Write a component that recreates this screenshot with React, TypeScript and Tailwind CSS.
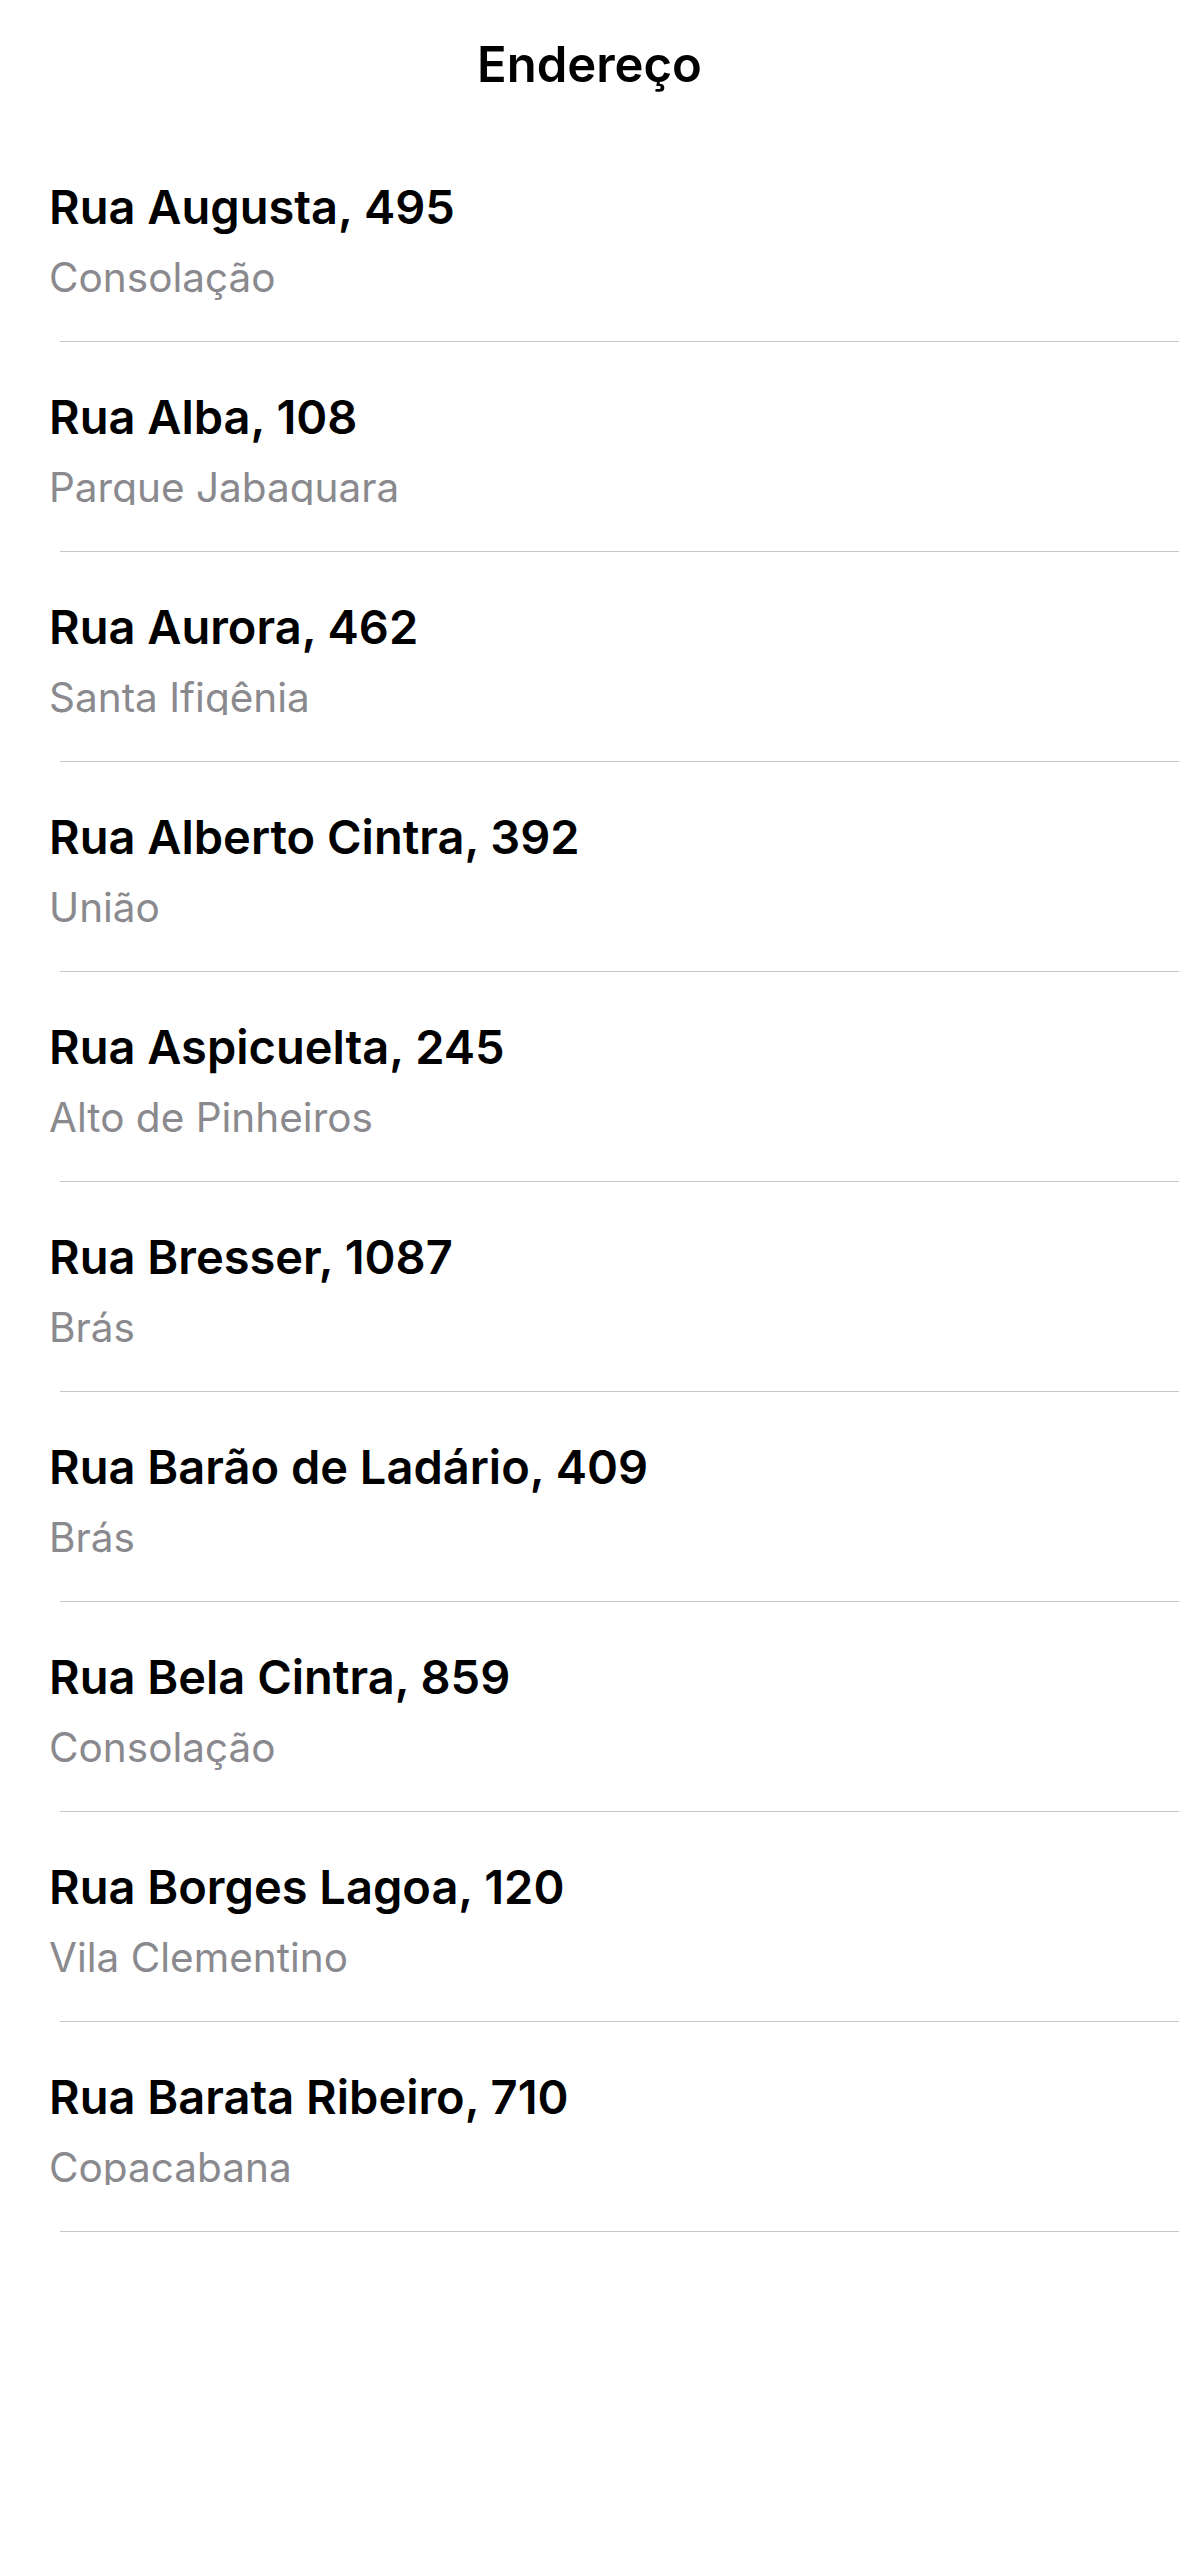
import React from 'react';

interface Address {
  street: string;
  district: string;
  // some rows in the capture have the descenders cut off
  clipped?: boolean;
}

const addresses: Address[] = [
  { street: 'Rua Augusta, 495', district: 'Consolação' },
  { street: 'Rua Alba, 108', district: 'Parque Jabaquara', clipped: true },
  { street: 'Rua Aurora, 462', district: 'Santa Ifigênia', clipped: true },
  { street: 'Rua Alberto Cintra, 392', district: 'União' },
  { street: 'Rua Aspicuelta, 245', district: 'Alto de Pinheiros' },
  { street: 'Rua Bresser, 1087', district: 'Brás' },
  { street: 'Rua Barão de Ladário, 409', district: 'Brás' },
  { street: 'Rua Bela Cintra, 859', district: 'Consolação' },
  { street: 'Rua Borges Lagoa, 120', district: 'Vila Clementino' },
  { street: 'Rua Barata Ribeiro, 710', district: 'Copacabana', clipped: true },
];

const AddressRow: React.FC<{ item: Address }> = ({ item }) => (
  <li className="flex flex-col h-[210px]">
    <div className="flex-1 pl-[49px] pt-[47px]">
      <p className="text-[47px] leading-[56px] font-semibold text-black">{item.street}</p>
      <p
        className={
          'mt-[19px] text-[40.5px] leading-[48px] text-[#8a8a8e] ' +
          (item.clipped ? 'h-[41px] overflow-hidden' : '')
        }
      >
        {item.district}
      </p>
    </div>
    <div className="ml-[60px] h-px bg-[#c6c6c8]" />
  </li>
);

export default function App() {
  return (
    <div className="min-h-screen w-full bg-white font-['Inter','Liberation_Sans',sans-serif] antialiased">
      {/* Nav title */}
      <header className="h-[132px] pt-[36px] text-center">
        <h1 className="text-[49px] leading-[58px] font-semibold text-black">Endereço</h1>
      </header>

      {/* Address list */}
      <ul>
        {addresses.map(item => (
          <AddressRow key={item.street} item={item} />
        ))}
      </ul>
    </div>
  );
}
